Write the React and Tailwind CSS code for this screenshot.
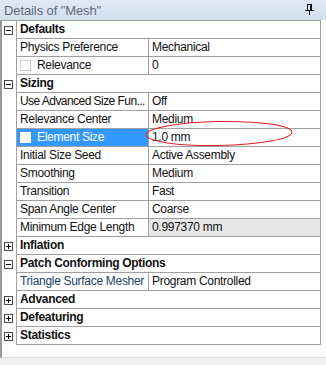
import React from "react";

const rows = [
  { type: "cat", label: "Defaults", open: true },
  { type: "prop", label: "Physics Preference", value: "Mechanical" },
  { type: "prop", label: "Relevance", value: "0", check: true },
  { type: "cat", label: "Sizing", open: true },
  { type: "prop", label: "Use Advanced Size Fun...", value: "Off", tight: true },
  { type: "prop", label: "Relevance Center", value: "Medium" },
  { type: "prop", label: "Element Size", value: "1.0 mm", check: true, selected: true },
  { type: "prop", label: "Initial Size Seed", value: "Active Assembly" },
  { type: "prop", label: "Smoothing", value: "Medium" },
  { type: "prop", label: "Transition", value: "Fast" },
  { type: "prop", label: "Span Angle Center", value: "Coarse" },
  { type: "prop", label: "Minimum Edge Length", value: "0.997370 mm", readonly: true },
  { type: "cat", label: "Inflation", open: false },
  { type: "cat", label: "Patch Conforming Options", open: true },
  { type: "prop", label: "Triangle Surface Mesher", value: "Program Controlled", blue: true },
  { type: "cat", label: "Advanced", open: false },
  { type: "cat", label: "Defeaturing", open: false },
  { type: "cat", label: "Statistics", open: false },
];

function Toggle({ open }) {
  return (
    <div className="relative w-[9px] h-[9px] border border-[#4a4a4a] bg-white">
      <div className="absolute left-[1px] top-[3px] w-[5px] h-[1px] bg-black" />
      {!open && <div className="absolute left-[3px] top-[1px] w-[1px] h-[5px] bg-black" />}
    </div>
  );
}

function Check({ selected }) {
  return (
    <div
      className={
        "w-[11px] h-[11px] border shrink-0 " +
        (selected ? "border-white bg-white" : "border-[#c8c8c8] bg-white")
      }
    />
  );
}

export default function App() {
  return (
    <div
      className="relative w-[326px] h-[365px] bg-[#f0f0f0] overflow-hidden"
      style={{ fontFamily: '"Liberation Sans", Arial, sans-serif' }}
    >
      {/* title bar */}
      <div className="h-[20px] bg-gradient-to-b from-[#dfe9f5] to-[#d2dfee] flex items-center justify-between pl-[4px] pr-[12px]">
        <span className="text-[13px] tracking-[-0.1px] text-[#5f6b7a] leading-none">Details of "Mesh"</span>
        <svg width="9" height="11" viewBox="0 0 9 11" className="mt-[-2px]">
          <rect x="0" y="6" width="9" height="1" fill="#111" />
          <rect x="2" y="0" width="5" height="1" fill="#111" />
          <rect x="2" y="0" width="1" height="6" fill="#111" />
          <rect x="6" y="0" width="1" height="6" fill="#111" />
          <rect x="5" y="1" width="1" height="5" fill="#111" />
          <rect x="4" y="7" width="1" height="4" fill="#111" />
        </svg>
      </div>
      {/* body */}
      <div className="h-[338px] bg-white border-l-2 border-b border-[#9a9a9a] border-b-[#dcdcdc] w-[326px]">
        <div className="w-[321px] border-t border-r border-[#a0a0a0] ml-[-2px]">
          {rows.map((r, i) => (
            <div key={i} className="flex h-[18px] text-[12px] tracking-[-0.3px] leading-[17px] text-[#111]">
              <div className="w-[17px] shrink-0 border-r border-[#a0a0a0] flex items-center justify-center pl-[1px]">
                {r.type === "cat" && <Toggle open={r.open} />}
              </div>
              {r.type === "cat" ? (
                <div className="flex-1 border-b border-[#a0a0a0] pl-[3px] font-bold whitespace-nowrap overflow-hidden">
                  {r.label}
                </div>
              ) : (
                <>
                  <div
                    className={
                      "w-[132px] shrink-0 border-b border-r border-[#a0a0a0] flex items-center gap-[6px] pl-[3px] whitespace-nowrap overflow-hidden " +
                      (r.selected ? "bg-[#3399ff] text-white" : "") +
                      (r.blue ? " text-[#213f66]" : "") +
                      (r.tight ? " tracking-[-0.55px]" : "")
                    }
                  >
                    {r.check && <Check selected={r.selected} />}
                    <span>{r.label}</span>
                  </div>
                  <div
                    className={
                      "flex-1 border-b border-[#a0a0a0] pl-[3px] whitespace-nowrap overflow-hidden " +
                      (r.readonly ? "bg-[#e8e8e8]" : "")
                    }
                  >
                    {r.value}
                  </div>
                </>
              )}
            </div>
          ))}
        </div>
      </div>
      {/* red ellipse annotation */}
      <svg className="absolute left-[144px] top-[119px]" width="152" height="30" viewBox="0 0 152 30">
        <ellipse cx="75" cy="14.5" rx="73" ry="12" fill="none" stroke="#e02020" strokeWidth="1" transform="rotate(-1 75 14.5)" />
      </svg>
    </div>
  );
}
